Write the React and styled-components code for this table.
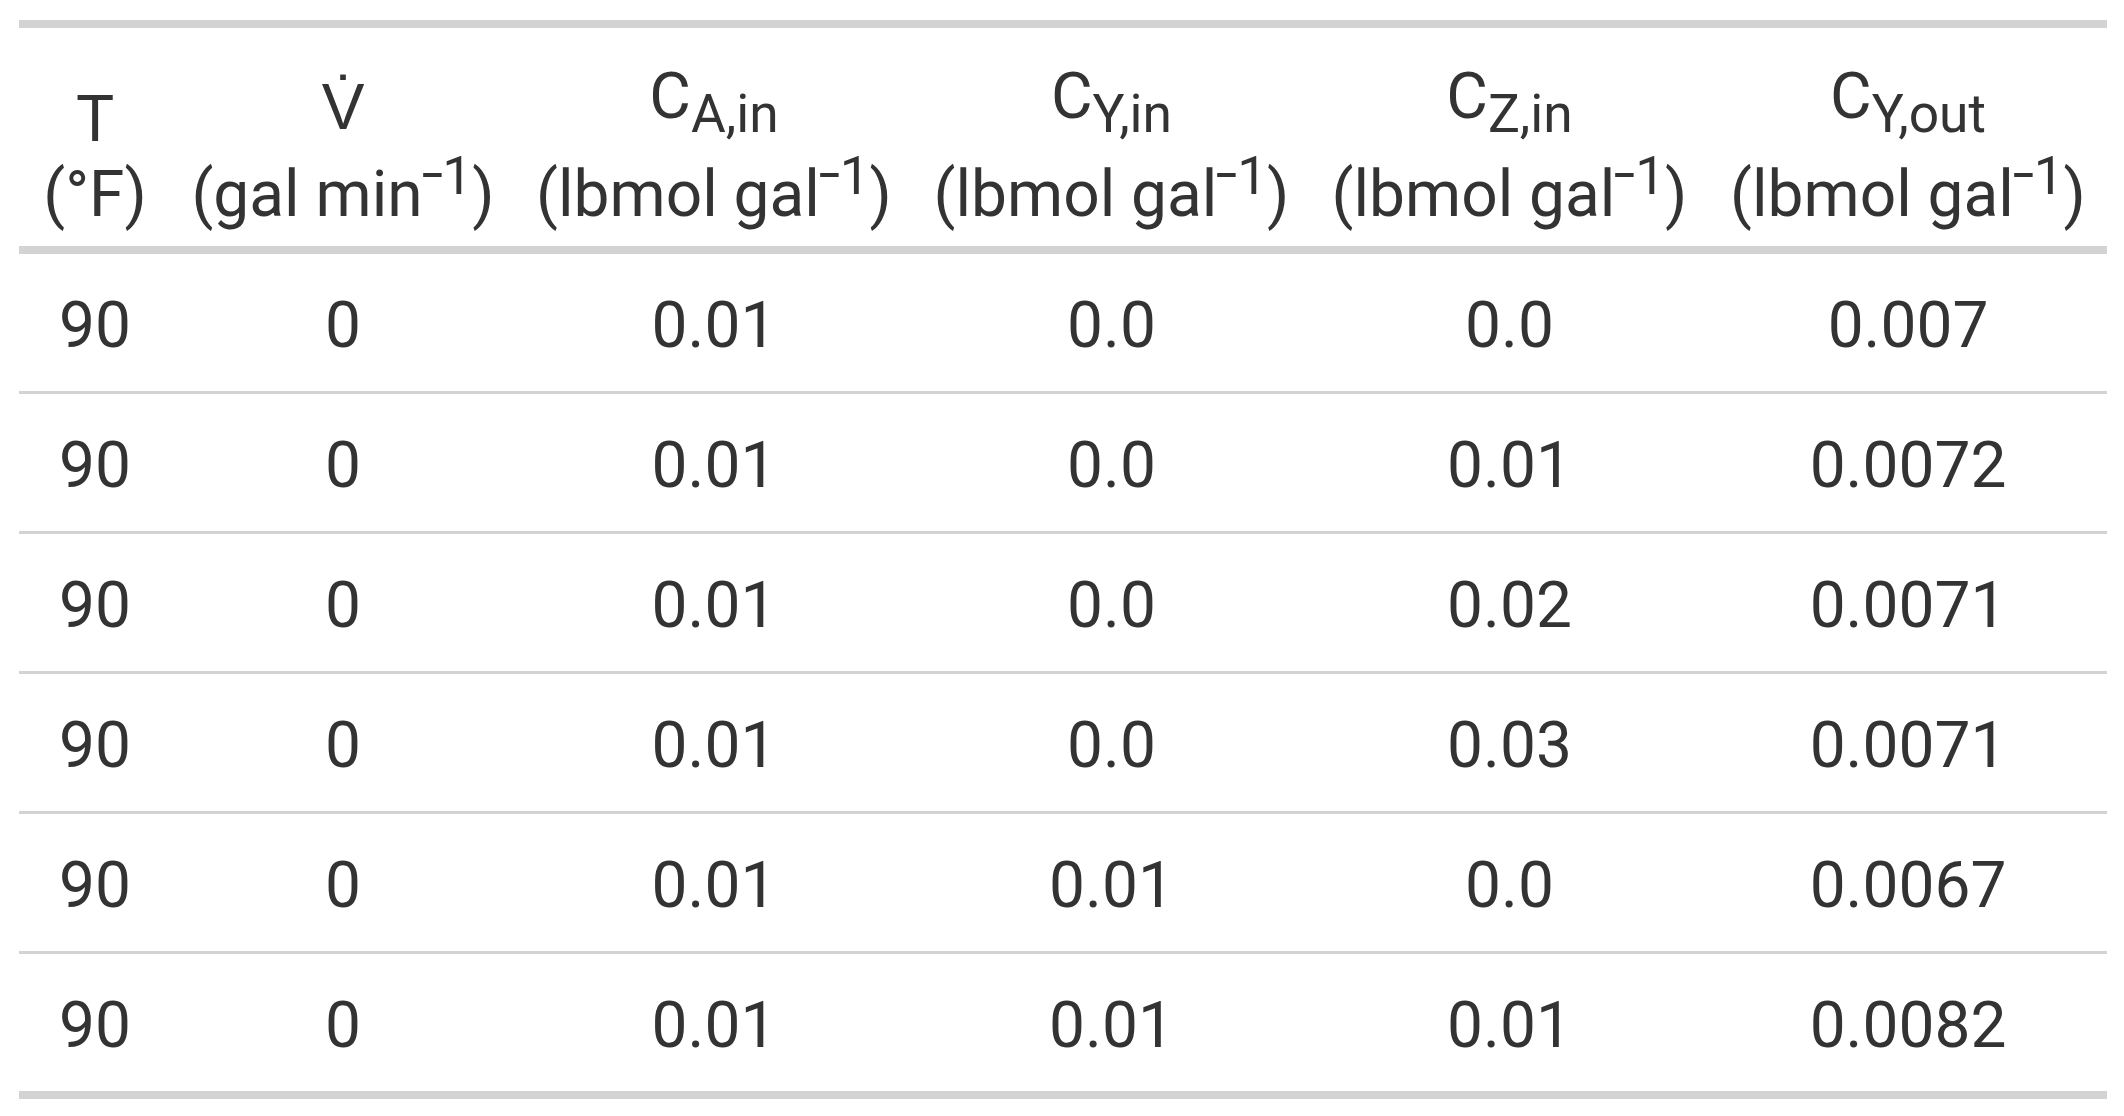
import React from "react";
import styled, { createGlobalStyle } from "styled-components";

const GlobalStyle = createGlobalStyle`
  html, body {
    margin: 0;
    padding: 0;
    background: #ffffff;
  }
  body {
    font-family: Roboto, "Liberation Sans", sans-serif;
    color: #333333;
  }
`;

const Page = styled.div`
  padding: 20px 17px 0 19px;
`;

const Table = styled.table`
  width: 100%;
  table-layout: fixed;
  border-collapse: collapse;
  border-top: 8px solid #d3d3d3;
  border-bottom: 8px solid #d3d3d3;
  font-family: Roboto, "Liberation Sans", sans-serif;
  font-size: 64px;
  color: #333333;
`;

const HeadRow = styled.tr`
  border-bottom: 8px solid #d3d3d3;
`;

const HeadCell = styled.th`
  font-weight: 400;
  text-align: center;
  vertical-align: bottom;
  line-height: normal;
  padding: 31px 10px 14px 10px;
  white-space: nowrap;
`;

const Line = styled.span`
  display: block;
`;

const Sub = styled.sub`
  font-size: smaller;
  vertical-align: sub;
`;

const Sup = styled.sup`
  font-size: smaller;
  vertical-align: super;
`;

const Minus = styled.span`
  display: inline-block;
  transform: scaleX(1.45) translateY(-3px);
  margin: 0 3px 0 2px;
`;

const BodyRow = styled.tr`
  border-bottom: ${(p) => (p.$last ? "none" : "3px solid #d3d3d3")};
`;

const Cell = styled.td`
  text-align: center;
  vertical-align: middle;
  line-height: 75px;
  padding: 34px 10px 28px 10px;
  white-space: nowrap;
`;

const widths = [152, 344, 398, 397, 399, 398];

const Unit = ({ children }) => (
  <Line>
    (
    {children}
    <Sup>
      <Minus>-</Minus>1
    </Sup>
    )
  </Line>
);

const headers = [
  <>
    <Line>T</Line>
    <Line>(°F)</Line>
  </>,
  <>
    <Line>{"V\u0307"}</Line>
    <Unit>gal min</Unit>
  </>,
  <>
    <Line>
      C<Sub>A,in</Sub>
    </Line>
    <Unit>lbmol gal</Unit>
  </>,
  <>
    <Line>
      C<Sub>Y,in</Sub>
    </Line>
    <Unit>lbmol gal</Unit>
  </>,
  <>
    <Line>
      C<Sub>Z,in</Sub>
    </Line>
    <Unit>lbmol gal</Unit>
  </>,
  <>
    <Line>
      C<Sub>Y,out</Sub>
    </Line>
    <Unit>lbmol gal</Unit>
  </>,
];

const rows = [
  ["90", "0", "0.01", "0.0", "0.0", "0.007"],
  ["90", "0", "0.01", "0.0", "0.01", "0.0072"],
  ["90", "0", "0.01", "0.0", "0.02", "0.0071"],
  ["90", "0", "0.01", "0.0", "0.03", "0.0071"],
  ["90", "0", "0.01", "0.01", "0.0", "0.0067"],
  ["90", "0", "0.01", "0.01", "0.01", "0.0082"],
];

export default function App() {
  return (
    <>
      <GlobalStyle />
      <Page>
        <Table>
          <colgroup>
            {widths.map((w, i) => (
              <col key={i} style={{ width: `${w}px` }} />
            ))}
          </colgroup>
          <thead>
            <HeadRow>
              {headers.map((h, i) => (
                <HeadCell key={i}>{h}</HeadCell>
              ))}
            </HeadRow>
          </thead>
          <tbody>
            {rows.map((r, i) => (
              <BodyRow key={i} $last={i === rows.length - 1}>
                {r.map((v, j) => (
                  <Cell key={j}>{v}</Cell>
                ))}
              </BodyRow>
            ))}
          </tbody>
        </Table>
      </Page>
    </>
  );
}
